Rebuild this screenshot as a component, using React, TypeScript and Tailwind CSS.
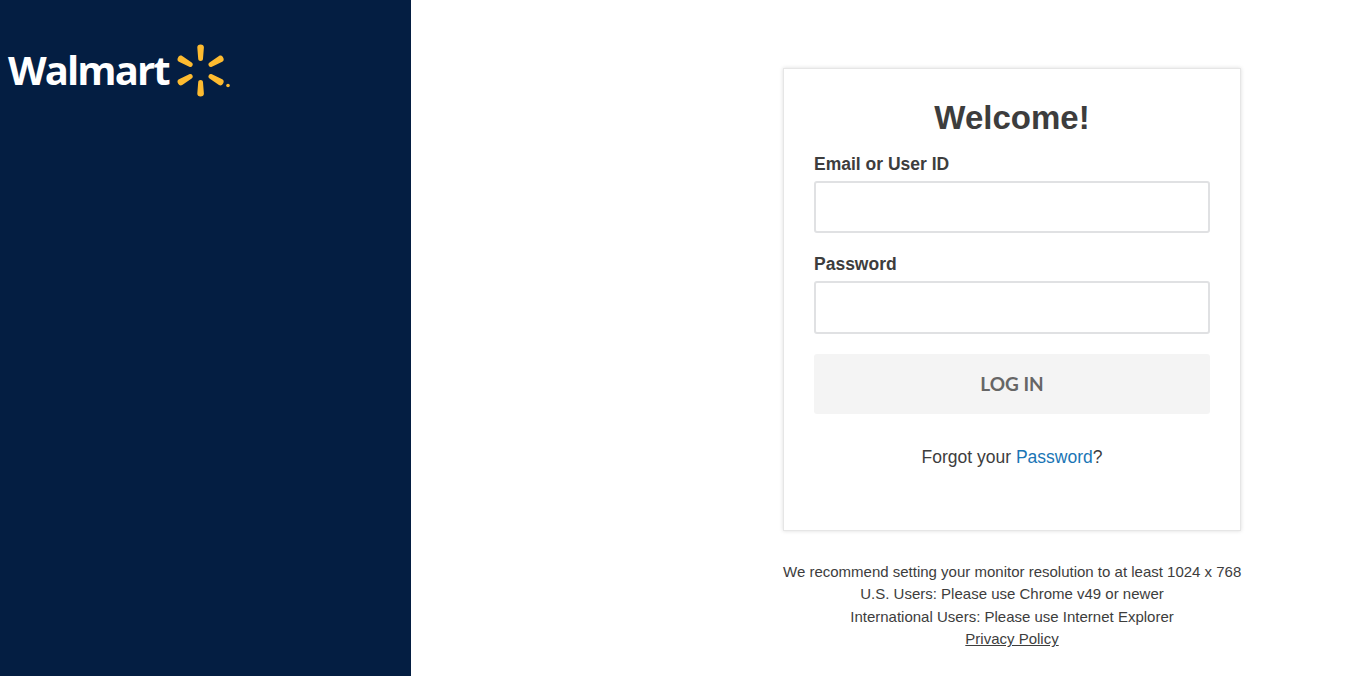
const sans = { fontFamily: '"Liberation Sans", Arial, sans-serif' };

const ray = 'M24.6 1.5c2.1 0 3.4 1.1 3.3 2.9l-.9 11.4c-.1 1.5-1 2.2-2.4 2.2s-2.3-.7-2.4-2.2l-.9-11.4c-.1-1.8 1.2-2.9 3.3-2.9z';

const Spark = () => (
  <svg width="56" height="56" viewBox="0 0 56 56" className="ml-[7px] mt-[2px]">
    <g fill="#fdbb30">
      {[0, 60, 120, 180, 240, 300].map((deg) => (
        <path key={deg} d={ray} transform={`rotate(${deg} 24.6 27.5)`} />
      ))}
      <circle cx="52" cy="42.5" r="1.8" />
    </g>
  </svg>
);

export default function App() {
  return (
    <div className="flex h-[676px] overflow-hidden bg-white text-[#3d3d3d]" style={sans}>
      <aside className="w-[411px] shrink-0 bg-[#041e42] pt-[41px] pl-2">
        <div className="flex items-center">
          <span
            className="text-[40px] leading-[56px] font-bold tracking-[-1.9px] text-white"
            style={{ fontFamily: '"Open Sans", sans-serif' }}
          >
            Walmart
          </span>
          <Spark />
        </div>
      </aside>

      <main className="pl-[372px] pt-[68px]">
        <div className="box-border h-[463px] w-[458px] border border-[#e6e6e6] px-[30px] pt-[28px] shadow-[0_0_4px_rgba(0,0,0,0.14)]">
          <h1 className="text-center text-[33px] leading-[42px] font-bold">Welcome!</h1>

          <label className="mt-[13px] block text-[17.5px] leading-[24px] font-bold">Email or User ID</label>
          <input className="mt-[5px] box-border block h-[52px] w-[396px] rounded-[3px] border-2 border-[#e0e1e3] bg-white" />

          <label className="mt-[19px] block text-[17.5px] leading-[24px] font-bold">Password</label>
          <input className="mt-[5px] box-border block h-[53px] w-[396px] rounded-[3px] border-2 border-[#e0e1e3] bg-white" />

          <button
            className="mt-[20px] block h-[60px] w-[396px] rounded-[3px] bg-[#f4f4f4] text-[19px] font-bold text-[#666666]"
            style={{ fontFamily: 'Lato, sans-serif' }}
          >
            LOG IN
          </button>

          <p className="mt-[31px] text-center text-[17.5px] leading-[24px]">
            Forgot your <a className="text-[#1a75b5]">Password</a>?
          </p>
        </div>

        <div className="mt-[30px] w-[458px] whitespace-nowrap text-center text-[15px] leading-[22.4px]">
          <p>We recommend setting your monitor resolution to at least 1024 x 768</p>
          <p>U.S. Users: Please use Chrome v49 or newer</p>
          <p>International Users: Please use Internet Explorer</p>
          <a className="underline">Privacy Policy</a>
        </div>
      </main>
    </div>
  );
}
